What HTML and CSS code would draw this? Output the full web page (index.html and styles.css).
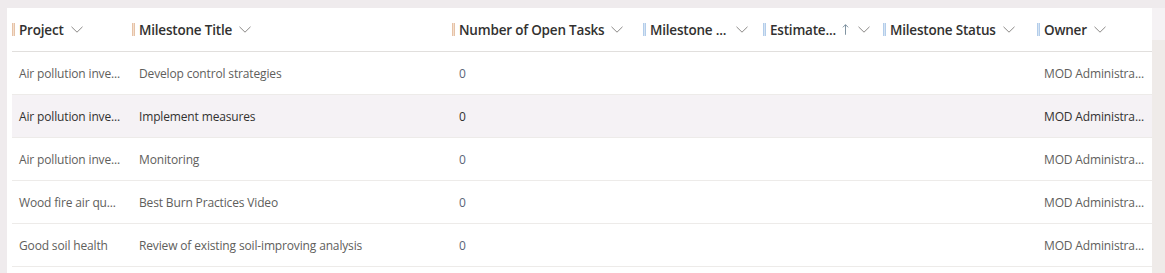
FILE: index.html
```html
<!DOCTYPE html>
<html>
<head>
<meta charset="utf-8">
<link rel="stylesheet" href="styles.css">
</head>
<body>
<div class="page">
  <div class="card">
    <div class="grid head">
      <div class="hcell"><span class="mark warm"></span><span class="htext">Project</span><svg class="chev" viewBox="0 0 12 7"><path d="M0.5 0.8 L6 6.2 L11.5 0.8"/></svg></div>
      <div class="hcell"><span class="mark warm"></span><span class="htext">Milestone Title</span><svg class="chev" viewBox="0 0 12 7"><path d="M0.5 0.8 L6 6.2 L11.5 0.8"/></svg></div>
      <div class="hcell"><span class="mark warm"></span><span class="htext">Number of Open Tasks</span><svg class="chev" viewBox="0 0 12 7"><path d="M0.5 0.8 L6 6.2 L11.5 0.8"/></svg></div>
      <div class="hcell"><span class="mark cool"></span><span class="htext">Milestone ...</span><svg class="chev push" viewBox="0 0 12 7"><path d="M0.5 0.8 L6 6.2 L11.5 0.8"/></svg></div>
      <div class="hcell"><span class="mark cool"></span><span class="htext">Estimate...</span><svg class="arrow" viewBox="0 0 8 14"><path d="M4 13 V1.5 M1 4.5 L4 1.5 L7 4.5"/></svg><svg class="chev" viewBox="0 0 12 7"><path d="M0.5 0.8 L6 6.2 L11.5 0.8"/></svg></div>
      <div class="hcell"><span class="mark cool"></span><span class="htext">Milestone Status</span><svg class="chev" viewBox="0 0 12 7"><path d="M0.5 0.8 L6 6.2 L11.5 0.8"/></svg></div>
      <div class="hcell"><span class="mark cool"></span><span class="htext">Owner</span><svg class="chev" viewBox="0 0 12 7"><path d="M0.5 0.8 L6 6.2 L11.5 0.8"/></svg></div>
    </div>
    <div class="grid row">
      <div class="cell">Air pollution inve...</div>
      <div class="cell">Develop control strategies</div>
      <div class="cell num">0</div>
      <div class="cell"></div><div class="cell"></div><div class="cell"></div>
      <div class="cell">MOD Administra...</div>
    </div>
    <div class="grid row hover">
      <div class="cell">Air pollution inve...</div>
      <div class="cell">Implement measures</div>
      <div class="cell num">0</div>
      <div class="cell"></div><div class="cell"></div><div class="cell"></div>
      <div class="cell">MOD Administra...</div>
    </div>
    <div class="grid row">
      <div class="cell">Air pollution inve...</div>
      <div class="cell">Monitoring</div>
      <div class="cell num">0</div>
      <div class="cell"></div><div class="cell"></div><div class="cell"></div>
      <div class="cell">MOD Administra...</div>
    </div>
    <div class="grid row">
      <div class="cell">Wood fire air qu...</div>
      <div class="cell">Best Burn Practices Video</div>
      <div class="cell num">0</div>
      <div class="cell"></div><div class="cell"></div><div class="cell"></div>
      <div class="cell">MOD Administra...</div>
    </div>
    <div class="grid row">
      <div class="cell">Good soil health</div>
      <div class="cell">Review of existing soil-improving analysis</div>
      <div class="cell num">0</div>
      <div class="cell"></div><div class="cell"></div><div class="cell"></div>
      <div class="cell">MOD Administra...</div>
    </div>
  </div>
  <div class="scroll">
    <div class="scroll-top"></div>
  </div>
</div>
</body>
</html>
```

FILE: styles.css
```css
* { box-sizing: border-box; }
html, body { margin: 0; padding: 0; }
body {
  background: #efebed;
  font-family: "Segoe UI", "Open Sans", "Noto Sans", sans-serif;
  overflow: hidden;
}
.page {
  display: flex;
  padding: 8px 0 0 7px;
  height: 273px;
}
.card {
  width: 1145px;
  background: #ffffff;
  padding-left: 5px;
}
.scroll {
  flex: 1;
  background: #efebe9;
}
.scroll-top {
  height: 32px;
  background: #f5f2f4;
}
.grid {
  display: grid;
  grid-template-columns: 120px 320px 191px 120px 120px 154px 1fr;
  align-items: center;
}
.head {
  height: 44px;
  border-bottom: 1px solid #e1dfdd;
}
.hcell {
  display: flex;
  align-items: center;
  white-space: nowrap;
  padding-right: 15px;
}
.mark {
  width: 3px;
  height: 13px;
  margin-right: 4px;
  flex: none;
}
.mark.warm { background: linear-gradient(90deg, #e6c2a6 0 1px, #f3dfcf 1px 2px, #e6c2a6 2px 3px); }
.mark.cool { background: linear-gradient(90deg, #b3cdea 0 1px, #d6e4f3 1px 2px, #b3cdea 2px 3px); }
.htext {
  font-size: 13.5px;
  font-weight: 600;
  color: #323130;
  letter-spacing: -0.2px;
}
.chev {
  width: 12px;
  height: 7px;
  margin-left: 7px;
  flex: none;
  fill: none;
  stroke: #8a8886;
  stroke-width: 1;
}
.chev.push { margin-left: auto; }
.arrow {
  width: 7px;
  height: 13px;
  margin-left: 6px;
  margin-right: 2px;
  fill: none;
  stroke: #6f8595;
  stroke-width: 1;
  flex: none;
}
.row {
  height: 43px;
  border-bottom: 1px solid #edebe9;
}
.row.hover { background: #f5f2f5; }
.cell {
  padding-left: 7px;
  font-size: 12px;
  color: #605e5c;
  white-space: nowrap;
  overflow: hidden;
  letter-spacing: -0.15px;
}
.row.hover .cell { color: #323130; }
.cell.num { color: #5b6478; }
.row.hover .cell.num { color: #323130; }
```
